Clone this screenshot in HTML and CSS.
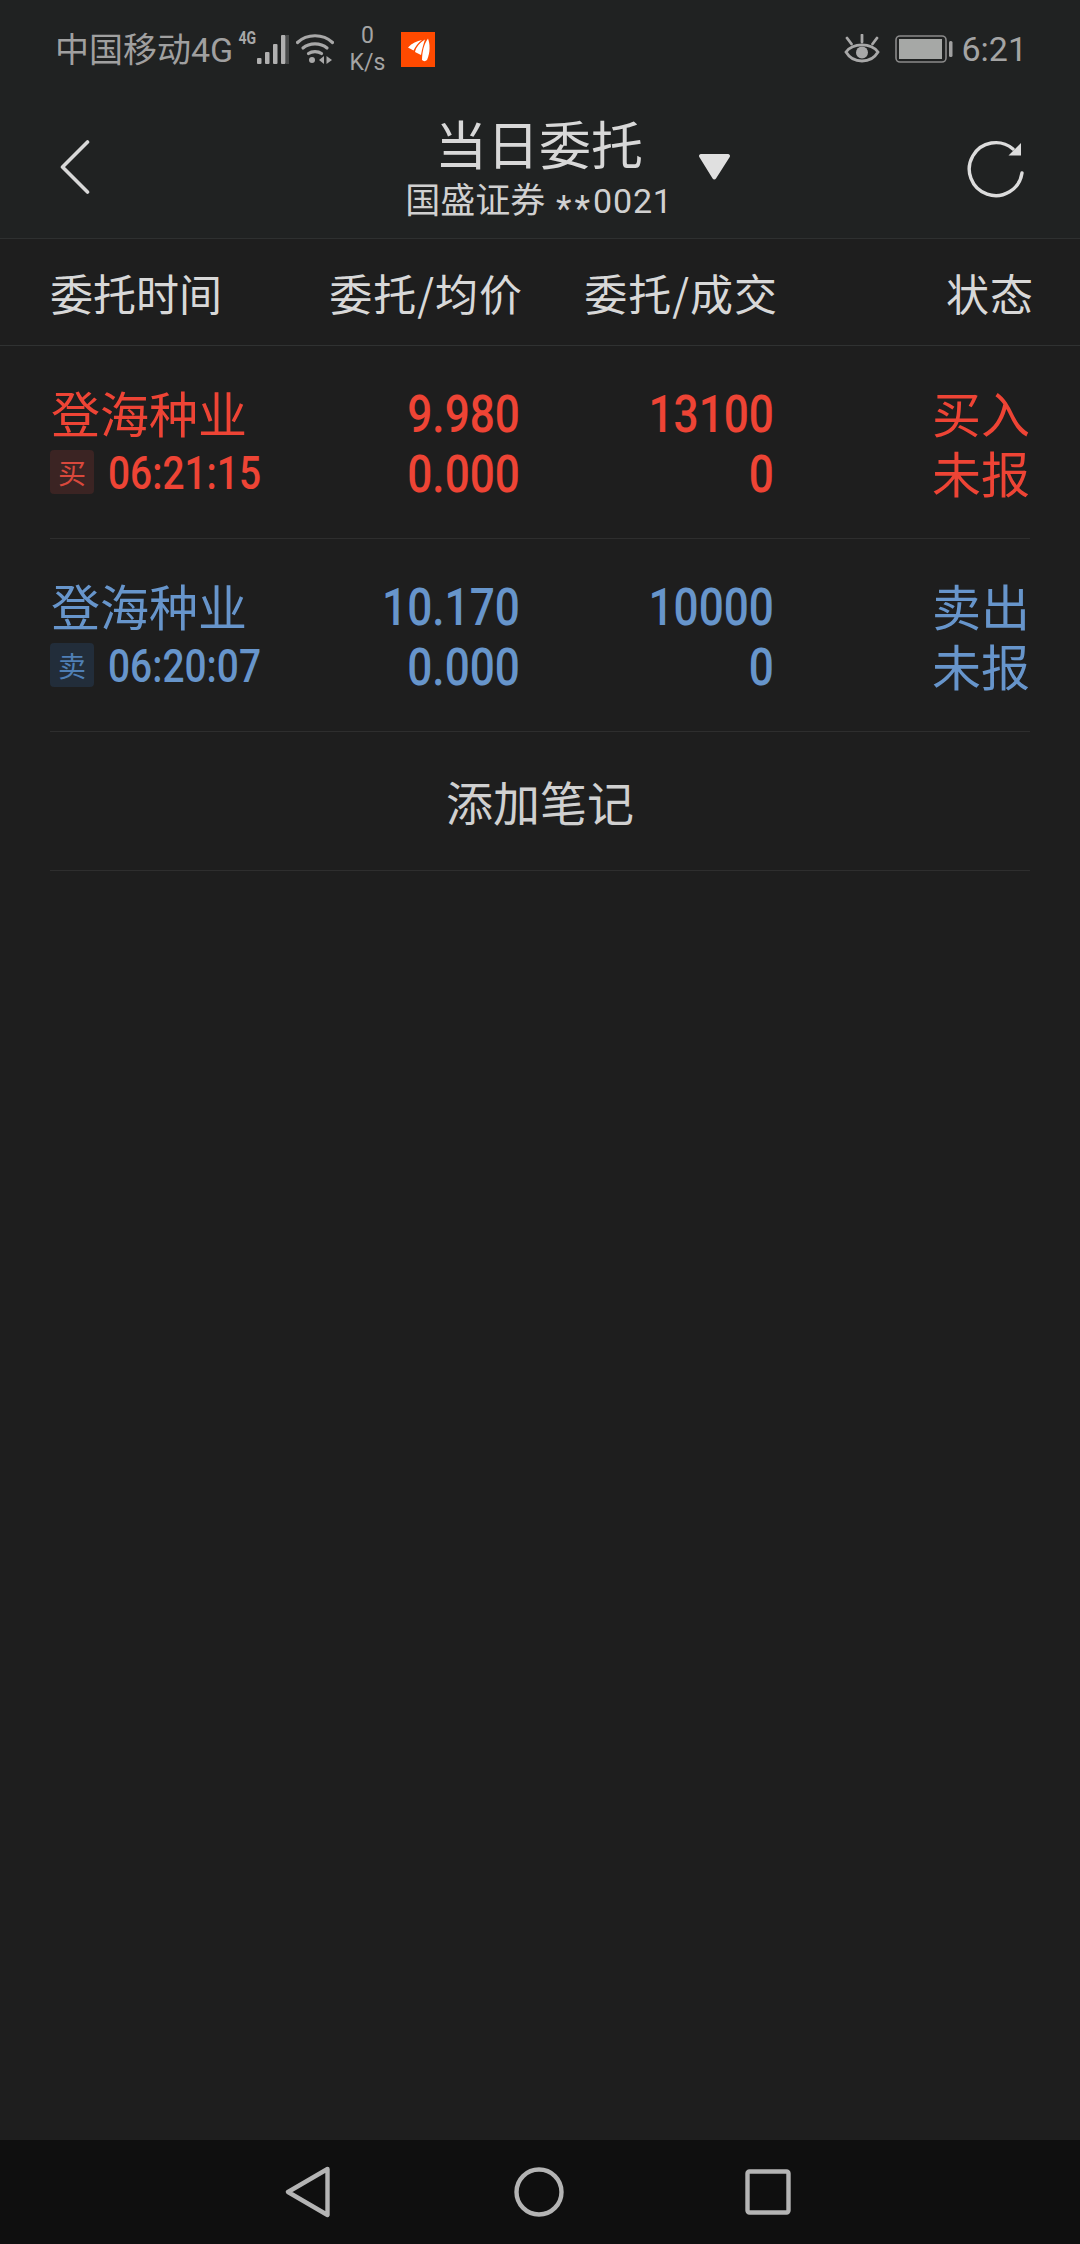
FILE: index.html
```html
<!DOCTYPE html>
<html lang="zh-CN">
<head>
<meta charset="utf-8">
<title>当日委托</title>
<link rel="stylesheet" href="styles.css">
</head>
<body>
<div class="page">
  <header class="top">
    <div class="status">
      <span class="carrier">中国移动<span class="latin">4G</span></span>
      <span class="tiny4g">4G</span>
      <svg class="signal" width="33" height="31" viewBox="0 0 33 31"><rect x="0" y="24" width="4.5" height="6" rx="1" fill="#b0b0b0"/><rect x="8" y="18" width="4.5" height="12" rx="1" fill="#b0b0b0"/><rect x="16" y="10" width="4.5" height="20" rx="1" fill="#b0b0b0"/><rect x="24" y="1" width="4.5" height="29" rx="1" fill="#b0b0b0"/><rect x="29" y="1" width="3" height="29" fill="#484a4a"/></svg>
      <svg class="wifi" width="38" height="32" viewBox="0 0 38 32" fill="none" stroke="#a8a8a8" stroke-width="3.2" stroke-linecap="round"><path d="M1.5 9.5C11 .5 27 .5 36.500 9.500"/><path d="M7 15C13.500 9.500 24.500 9.500 31 15"/><path d="M12.500 20.500C16 18 22 18 25.500 20.500"/><circle cx="16" cy="27" r="3" fill="#a8a8a8" stroke="none"/><path d="M28 23v8l-5-4zM30.500 23v8l5.500-4z" fill="#a8a8a8" stroke="none"/></svg>
      <div class="speed"><span>0</span><span>K/s</span></div>
      <svg class="applogo" width="34" height="35" viewBox="0 0 34 35"><rect width="34" height="35" fill="#ff4a00"/><path d="M7 15.500C11 11 16 9 21 8 17 11 14.500 14 12.500 18.500z" fill="#fff"/><path d="M14 20C15 15 19 10.500 24 7.500 22.500 12 21 17 20 23z" fill="#fff"/><path d="M21 28C21 20 23 12 27 6.500 29 12 29.500 20 26 28 24.500 29.500 22.500 29.500 21 28z" fill="#fff"/></svg>
      <span class="status-gap"></span>
      <svg class="eye" width="36" height="30" viewBox="0 0 36 30" fill="none" stroke="#a8a8a8" stroke-width="2.800"><path d="M2 18C9 8.500 27 8.500 34 18 27 30 9 30 2 18z"/><circle cx="18" cy="18.500" r="6" fill="#a8a8a8" stroke="none"/><path d="M18 1v7M3 4l4.500 6M33 4l-4.500 6" stroke-linecap="round"/></svg>
      <svg class="battery" width="59" height="28" viewBox="0 0 59 28" fill="none"><rect x="1" y="1" width="50" height="26" rx="4" stroke="#8a8a8a" stroke-width="1.600"/><rect x="4" y="4" width="43" height="20" fill="#a6a8a6"/><rect x="54" y="6" width="3.500" height="16" rx="1.500" fill="#a0a0a0"/></svg>
      <span class="clock">6:21</span>
    </div>
    <div class="titlebar">
      <svg class="back" width="30" height="54" viewBox="0 0 30 54" fill="none" stroke="#d8d8d8" stroke-width="3.600" stroke-linecap="round" stroke-linejoin="round"><path d="M27.500 2L2.500 27l25 25"/></svg>
      <div class="titles">
        <div class="title">当日委托</div>
        <div class="subtitle">国盛证券 <span class="stars">**</span><span class="digits">0021</span></div>
      </div>
      <div class="title-end">
        <svg class="caret" width="33" height="27" viewBox="0 0 33 27"><path d="M3 1h27a2 2 0 0 1 1.700 3L18 25.500a2 2 0 0 1-3.400 0L1.300 4A2 2 0 0 1 3 1z" fill="#e0e0e0"/></svg>
        <svg class="refresh" width="58" height="60" viewBox="0 0 58 60" fill="none"><path d="M47 11A26.500 26.500 0 1 0 56 35" stroke="#dcdcdc" stroke-width="3.400" stroke-linecap="round"/><path d="M55 5v12.500H42.500z" fill="#dcdcdc"/></svg>
      </div>
    </div>
  </header>

  <div class="grid heading">
    <span>委托时间</span>
    <span class="end">委托/均价</span>
    <span class="end">委托/成交</span>
    <span class="end">状态</span>
  </div>

  <div class="rows">
    <div class="grid order buy">
      <span class="name">登海种业</span>
      <span class="num end">9.980</span>
      <span class="num end">13100</span>
      <span class="cn end">买入</span>
      <span class="when"><span class="badge">买</span><span class="time">06:21:15</span></span>
      <span class="num end">0.000</span>
      <span class="num end">0</span>
      <span class="cn end">未报</span>
    </div>
    <div class="grid order sell">
      <span class="name">登海种业</span>
      <span class="num end">10.170</span>
      <span class="num end">10000</span>
      <span class="cn end">卖出</span>
      <span class="when"><span class="badge">卖</span><span class="time">06:20:07</span></span>
      <span class="num end">0.000</span>
      <span class="num end">0</span>
      <span class="cn end">未报</span>
    </div>
    <div class="note">添加笔记</div>
  </div>

  <div class="spacer"></div>

  <nav class="navbar">
    <svg width="46" height="52" viewBox="0 0 46 52" fill="none" stroke="#b4b4b4" stroke-width="4.400" stroke-linejoin="round"><path d="M42.500 3L3 26l39.500 23z"/></svg>
    <svg width="50" height="50" viewBox="0 0 50 50" fill="none" stroke="#b4b4b4" stroke-width="4.400"><circle cx="25" cy="25" r="22.500"/></svg>
    <svg width="46" height="46" viewBox="0 0 46 46" fill="none" stroke="#b4b4b4" stroke-width="4.400" stroke-linejoin="round"><rect x="2.500" y="2.500" width="41" height="41" rx="2"/></svg>
  </nav>
</div>
</body>
</html>
```

FILE: styles.css
```css
* { box-sizing: border-box; }
html, body { margin: 0; padding: 0; }
body {
  background: #1e1e1e;
  color: #dcdcdc;
  font-family: "Noto Sans CJK SC", "Noto Sans", sans-serif;
}
.page { width: 1080px; height: 2244px; display: flex; flex-direction: column; }
.latin { font-family: Roboto, sans-serif; }

.top { background: #202222; height: 239px; border-bottom: 1px solid #2e3030; }

.status { height: 98px; padding: 0 53px 0 55px; display: flex; align-items: center; color: #a0a0a0; }
.carrier { font-size: 34px; line-height: 40px; white-space: nowrap; }
.tiny4g { font-family: Roboto, sans-serif; font-weight: 700; font-size: 18px; line-height: 18px; color: #a8a8a8; margin: -22px -2.500px 0 3px; transform: scaleX(.78); }
.signal { margin-left: 1px; }
.wifi { margin-left: 6px; }
.speed { display: flex; flex-direction: column; align-items: center; width: 36px; margin-left: 15px; font-family: Roboto, sans-serif; font-size: 23px; line-height: 27px; color: #a4a4a4; }
.applogo { margin-left: 16px; }
.status-gap { flex: 1; }
.battery { margin-left: 15px; }
.clock { font-family: Roboto, sans-serif; font-size: 34px; line-height: 40px; margin-left: 7px; color: #a4a4a4; }

.titlebar { height: 140px; padding: 0 56px 0 60px; display: grid; grid-template-columns: 339px 280px 1fr; align-items: center; }
.back { margin-top: -3px; }
.titles { text-align: center; padding-top: 5px; }
.title { font-size: 52px; line-height: 60px; color: #d8d8d8; white-space: nowrap; }
.subtitle { font-size: 35px; line-height: 40px; margin-top: 5px; color: #d0d0d0; white-space: nowrap; }
.stars { font-family: Roboto, sans-serif; font-size: 36px; letter-spacing: 3px; margin-left: 3px; vertical-align: -8px; }
.digits { font-family: Roboto, sans-serif; font-size: 34px; letter-spacing: .8px; }
.title-end { display: flex; align-items: center; }
.caret { margin: -3px 0 0 19px; }
.refresh { margin-left: auto; }

.grid { display: grid; grid-template-columns: 250px 220px 254px 256px; }
.end { text-align: right; }
.heading { font-size: 43px; line-height: 106px; height: 107px; padding: 0 48px 0 50px; grid-template-columns: 250px 223px 255px 256px; border-bottom: 1px solid #303232; color: #d8d8d8; white-space: nowrap; }
.heading .end { letter-spacing: 1px; }

.rows { padding: 0 50px; }
.order { height: 193px; padding-top: 39px; grid-auto-rows: 60px; border-bottom: 1px solid #2e2e2e; }
.buy { color: #ee4435; }
.sell { color: #6795cb; }
.name { font-size: 49px; line-height: 54px; white-space: nowrap; margin-left: 1px; }
.num { font-family: Roboto, sans-serif; font-weight: 480; font-size: 52px; line-height: 60px; transform: scaleX(.85); transform-origin: right center; }
.cn { font-size: 49px; line-height: 54px; }
.when { display: flex; align-items: center; }
.badge { width: 44px; height: 44px; margin-top: -6px; border-radius: 4px; font-size: 28px; line-height: 44px; text-align: center; }
.buy .badge { background: #3b2423; color: #d9483c; }
.sell .badge { background: #222d3a; color: #4f7fb5; }
.time { font-family: Roboto, sans-serif; font-weight: 480; font-size: 46px; line-height: 60px; margin: -4px 0 0 14px; transform: scaleX(.845); transform-origin: left center; }

.note { height: 139px; border-bottom: 1px solid #2e2e2e; font-size: 47px; line-height: 137px; text-align: center; color: #d0d0d0; }

.spacer { flex: 1; }
.navbar { height: 104px; background: #0f0f0f; display: flex; align-items: center; padding: 0 0 0 285px; }
.navbar svg:nth-child(2) { margin-left: 183px; }
.navbar svg:nth-child(3) { margin-left: 181px; }
```
